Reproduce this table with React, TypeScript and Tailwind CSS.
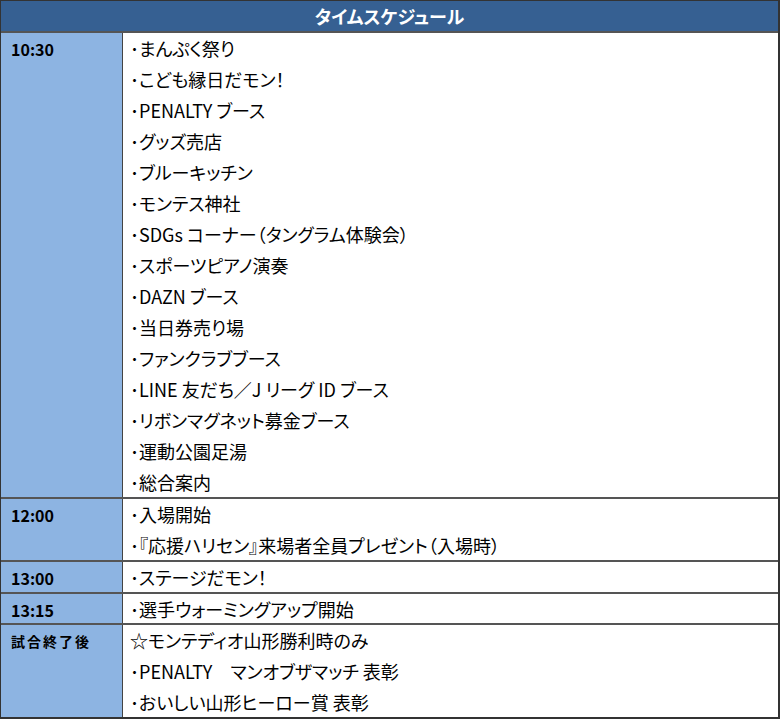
import React from 'react';

// Schedule rows: time label on the left, list of events on the right
const schedule: { time: string; items: string[]; h: string; wide?: boolean }[] = [
  {
    time: '10:30',
    h: 'h-[466px] shrink-0',
    items: [
      '･まんぷく祭り',
      '･こども縁日だモン！',
      '･PENALTY ブース',
      '･グッズ売店',
      '･ブルーキッチン',
      '･モンテス神社',
      '･SDGs コーナー（タングラム体験会）',
      '･スポーツピアノ演奏',
      '･DAZN ブース',
      '･当日券売り場',
      '･ファンクラブブース',
      '･LINE 友だち／J リーグ ID ブース',
      '･リボンマグネット募金ブース',
      '･運動公園足湯',
      '･総合案内',
    ],
  },
  { time: '12:00', h: 'h-[63px] shrink-0', items: ['･入場開始', '･『応援ハリセン』来場者全員プレゼント（入場時）'] },
  { time: '13:00', h: 'h-[32px] shrink-0', items: ['･ステージだモン！'] },
  { time: '13:15', h: 'h-[31px] shrink-0', items: ['･選手ウォーミングアップ開始'] },
  {
    time: '試合終了後',
    h: 'flex-1 min-h-0',
    wide: true,
    items: ['☆モンテディオ山形勝利時のみ', '･PENALTY　マンオブザマッチ 表彰', '･おいしい山形ヒーロー賞 表彰'],
  },
];

const font = { fontFamily: '"Noto Sans CJK JP", "Liberation Sans", sans-serif', fontFeatureSettings: '"palt"' };

export default function App() {
  return (
    <div className="w-[780px] h-[719px] bg-white overflow-hidden text-black" style={font}>
      <div className="border-t border-l border-[#333] border-r-2 border-b-2 h-full flex flex-col">
        {/* Header */}
        <div className="h-[32px] shrink-0 bg-[#366092] border-b-2 border-[#555] flex items-center justify-center text-white font-bold text-[18px] leading-none">
          タイムスケジュール
        </div>

        {schedule.map((row, i) => (
          <div
            key={i}
            className={`flex ${row.h} ${i < schedule.length - 1 ? 'border-b-2 border-[#555]' : ''}`}
          >
            <div className="w-[122px] shrink-0 bg-[#8db4e2] border-r border-[#444] pl-[10px]">
              <div className="h-[31px] flex items-center">
                <span className={`font-bold leading-none ${row.wide ? 'text-[14px] tracking-[2px]' : 'text-[16px]'}`}>
                  {row.time}
                </span>
              </div>
            </div>
            <div className="flex-1 pl-[7px] flex flex-col">
              {row.items.map((item, j) => (
                <div key={j} className="flex-1 flex items-center text-[18px] leading-none">
                  {item}
                </div>
              ))}
            </div>
          </div>
        ))}
      </div>
    </div>
  );
}
